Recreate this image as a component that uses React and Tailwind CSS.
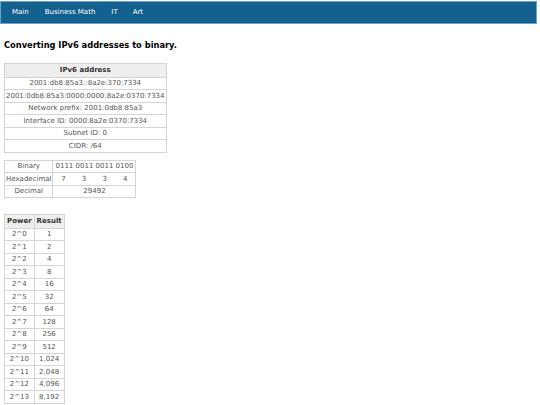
const powers = Array.from({ length: 14 }, (_, i) => [`2^${i}`, (2 ** i).toLocaleString("en-US")]);

const cell = "border border-[#d4d4d4] text-center px-[1px] h-[12.5px] leading-none whitespace-nowrap";
const head = "border border-[#d4d4d4] text-center px-[2px] h-[13.5px] leading-none bg-[#eee] font-bold text-[#333]";

export default function App() {
  return (
    <div className="w-[540px] h-[405px] overflow-hidden bg-white text-[#555] text-[7px]" style={{ fontFamily: '"DejaVu Sans", Verdana, sans-serif' }}>
      <nav className="w-[537px] h-[23px] mt-[1px] bg-[#14608f] border border-[#6aa3c6] flex items-center text-white text-[7px]">
        <a className="ml-[11px]">Main</a>
        <a className="ml-[16px]">Business Math</a>
        <a className="ml-[16px]">IT</a>
        <a className="ml-[15px]">Art</a>
      </nav>

      <div className="px-[4px]">
        <h1 className="mt-[17px] text-[8.3px] font-bold text-black leading-none">Converting IPv6 addresses to binary.</h1>

        <table className="mt-[14px] border-collapse">
          <thead>
            <tr>
              <th className={head}>IPv6 address</th>
            </tr>
          </thead>
          <tbody>
            {[
              "2001:db8:85a3::8a2e:370:7334",
              "2001:0db8:85a3:0000:0000:8a2e:0370:7334",
              "Network prefix: 2001:0db8:85a3",
              "Interface ID: 0000:8a2e:0370:7334",
              "Subnet ID: 0",
              "CIDR: /64",
            ].map((t) => (
              <tr key={t}>
                <td className={cell}>{t}</td>
              </tr>
            ))}
          </tbody>
        </table>

        <table className="mt-[7px] border-collapse">
          <tbody>
            <tr>
              <td className={cell}>Binary</td>
              <td className={`${cell} px-[2px]`} colSpan={4}>0111 0011 0011 0100</td>
            </tr>
            <tr>
              <td className={cell}>Hexadecimal</td>
              <td className={`${cell} border-x-0 w-[20px]`}>7</td>
              <td className={`${cell} border-x-0 w-[20px]`}>3</td>
              <td className={`${cell} border-x-0 w-[20px]`}>3</td>
              <td className={`${cell} border-l-0 w-[20px]`}>4</td>
            </tr>
            <tr>
              <td className={cell}>Decimal</td>
              <td className={cell} colSpan={4}>29492</td>
            </tr>
          </tbody>
        </table>

        <table className="mt-[16px] border-collapse">
          <thead>
            <tr>
              <th className={head}>Power</th>
              <th className={head}>Result</th>
            </tr>
          </thead>
          <tbody>
            {powers.map(([p, r]) => (
              <tr key={p}>
                <td className={cell}>{p}</td>
                <td className={cell}>{r}</td>
              </tr>
            ))}
          </tbody>
        </table>
      </div>
    </div>
  );
}
